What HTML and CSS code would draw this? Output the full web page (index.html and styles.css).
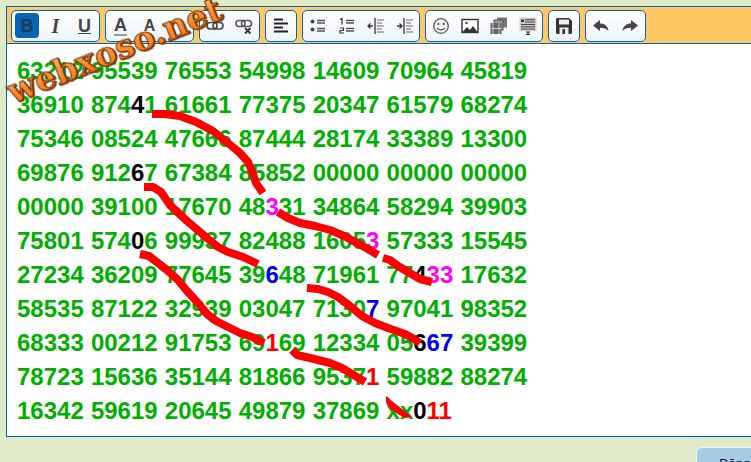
FILE: index.html
```html
<!DOCTYPE html>
<html lang="vi">
<head>
    <meta charset="UTF-8">
    <title>webxoso.net</title>
    <link rel="stylesheet" href="styles.css">
</head>
<body>
    <div class="editor">
        <div class="toolbar">
            <div class="tb-group">
                <button class="tb-btn active"><b class="glyph">B</b></button>
                <button class="tb-btn"><i class="glyph serif">I</i></button>
                <button class="tb-btn"><u class="glyph">U</u></button>
            </div>
            <div class="tb-group">
                <button class="tb-btn"><span class="glyph under">A</span></button>
                <button class="tb-btn"><span class="glyph small">A</span></button>
                <button class="tb-btn"></button>
            </div>
            <div class="tb-group wide">
                <button class="tb-btn">
                    <svg class="icon" viewBox="0 0 18 18"><g fill="none" stroke="#444" stroke-width="1.6"><rect x="1" y="5.5" width="10" height="6.5" rx="3.2"/><rect x="7" y="5.5" width="10" height="6.5" rx="3.2"/></g></svg>
                </button>
                <button class="tb-btn">
                    <svg class="icon" viewBox="0 0 18 18"><g fill="none" stroke="#555" stroke-width="1.6"><rect x="1" y="3.5" width="9" height="6" rx="3"/><rect x="6.5" y="3.5" width="10" height="6" rx="3"/><path d="M10 11l5.5 5.5M15.500 11L10 16.500" stroke="#333" stroke-width="1.8"/></g></svg>
                </button>
            </div>
            <div class="tb-group wide">
                <button class="tb-btn">
                    <svg class="icon" viewBox="0 0 18 18"><path d="M2 2.500h9M2 6.500h14M2 10.500h9M2 14.500h14" stroke="#222" stroke-width="2"/></svg>
                </button>
            </div>
            <div class="tb-group">
                <button class="tb-btn">
                    <svg class="icon" viewBox="0 0 18 18"><circle cx="3.500" cy="4.500" r="2" fill="#444"/><circle cx="3.500" cy="12.500" r="2" fill="#444"/><path d="M8 3.500h8M8 6h8M8 11.500h8M8 14h8" stroke="#555" stroke-width="1.3"/></svg>
                </button>
                <button class="tb-btn">
                    <svg class="icon" viewBox="0 0 18 18"><path d="M2 2.500l2-1v6M2 11h3.500v2.500H2V16h4" fill="none" stroke="#333" stroke-width="1.2"/><path d="M8 3.500h8M8 6h8M8 11.500h8M8 14h8" stroke="#555" stroke-width="1.3"/></svg>
                </button>
                <button class="tb-btn">
                    <svg class="icon" viewBox="0 0 18 18"><path d="M1 9h5M3.500 6.500L1 9l2.500 2.500" fill="none" stroke="#333" stroke-width="1.3"/><path d="M8 1v16" stroke="#222" stroke-width="1.2"/><path d="M10 3h7M10 6h5M10 9h7M10 12h5M10 15h7" stroke="#666" stroke-width="1.2"/></svg>
                </button>
                <button class="tb-btn">
                    <svg class="icon" viewBox="0 0 18 18"><path d="M1 9h5M3.500 6.500L6 9l-2.500 2.500" fill="none" stroke="#333" stroke-width="1.3"/><path d="M8 1v16" stroke="#222" stroke-width="1.2"/><path d="M10 3h7M10 6h5M10 9h7M10 12h5M10 15h7" stroke="#666" stroke-width="1.2"/></svg>
                </button>
            </div>
            <div class="tb-group">
                <button class="tb-btn">
                    <svg class="icon" viewBox="0 0 18 18"><circle cx="9" cy="9" r="7.300" fill="#f4f4f4" stroke="#555" stroke-width="1.3"/><circle cx="6.300" cy="7" r="1.100" fill="#444"/><circle cx="11.700" cy="7" r="1.100" fill="#444"/><path d="M5 11c1.500 2.500 6.500 2.500 8 0" fill="none" stroke="#444" stroke-width="1.200"/></svg>
                </button>
                <button class="tb-btn">
                    <svg class="icon" viewBox="0 0 18 18"><rect x="1" y="2.500" width="16" height="13" fill="#fff" stroke="#333" stroke-width="1.400"/><path d="M1.500 15l4.500-5 3 3 3-4 4.500 6z" fill="#333"/><circle cx="5.500" cy="6" r="1.300" fill="#555"/></svg>
                </button>
                <button class="tb-btn">
                    <svg class="icon" viewBox="0 0 18 18"><rect x="7" y="0.500" width="10" height="10" fill="#777"/><rect x="4" y="3" width="9" height="10" fill="#999" stroke="#555"/><rect x="0.500" y="6" width="11" height="11" fill="#666"/><path d="M3 6v11M9 6v11M0.500 11.500h11" stroke="#ccc"/></svg>
                </button>
                <button class="tb-btn">
                    <svg class="icon" viewBox="0 0 18 18"><rect x="0.500" y="0.500" width="17" height="13.500" fill="#ccc"/><path d="M2 2.500h3v2.500H2z" fill="#333"/><path d="M6 2.800h10M6 5h10M2 7.500h14M2 9.800h14M2 12h14" stroke="#444" stroke-width="1.100"/><path d="M7 15h4M7 17.500h4M9 15v2.500" stroke="#222" stroke-width="1.100"/></svg>
                </button>
            </div>
            <div class="tb-group wide">
                <button class="tb-btn">
                    <svg class="icon" viewBox="0 0 18 18"><path d="M2.500 1h11.500l3 3v11.500a1.500 1.500 0 0 1-1.500 1.500h-13A1.500 1.500 0 0 1 1 15.500v-13A1.500 1.500 0 0 1 2.500 1z" fill="#333"/><rect x="4" y="2.500" width="10" height="5" fill="#eee"/><rect x="4.500" y="10.500" width="9" height="6.500" fill="#eee"/><rect x="7.500" y="12" width="2.500" height="5" fill="#333"/></svg>
                </button>
            </div>
            <div class="tb-group wide">
                <button class="tb-btn">
                    <svg class="icon" viewBox="0 0 18 18"><path d="M1 8.500L8 3v3.500c4.500 0 8 2.500 8.500 7.500-2-2.700-4.500-3.300-8.500-3.300V14z" fill="#444"/></svg>
                </button>
                <button class="tb-btn">
                    <svg class="icon" viewBox="0 0 18 18"><path d="M17 8.500L10 3v3.500C5.500 6.500 2 9 1.500 14c2-2.700 4.500-3.300 8.500-3.300V14z" fill="#444"/></svg>
                </button>
            </div>
        </div>

        <div class="content">
            <div class="row">63212 95539 76553 54998 14609 70964 45819</div>
            <div class="row">36910 874<span class="k">4</span>1 61661 77375 20347 61579 68274</div>
            <div class="row">75346 08524 47666 87444 28174 33389 13300</div>
            <div class="row">69876 912<span class="k">6</span>7 67384 85852 00000 00000 00000</div>
            <div class="row">00000 39100 17670 48<span class="m">3</span>31 34864 58294 39903</div>
            <div class="row">75801 574<span class="k">0</span>6 99937 82488 1605<span class="m">3</span> 57333 15545</div>
            <div class="row">27234 36209 77645 39<span class="u">6</span>48 71961 77<span class="k">4</span><span class="m">33</span> 17632</div>
            <div class="row">58535 87122 32939 03047 7130<span class="u">7</span> 97041 98352</div>
            <div class="row">68333 00212 91753 69<span class="r">1</span>69 12334 05<span class="k">6</span><span class="u">67</span> 39399</div>
            <div class="row">78723 15636 35144 81866 9537<span class="r">1</span> 59882 88274</div>
            <div class="row">16342 59619 20645 49879 37869 xx<span class="k">0</span><span class="r">11</span></div>
        </div>
    </div>

    <div class="footer">
        <button class="submit">Đăng nhập</button>
    </div>

    <!-- net ve tay va logo nam de len tren trang -->
    <svg class="overlay" viewBox="0 0 751 462">
        <defs>
            <linearGradient id="logoFill" x1="0" y1="0" x2="0" y2="1">
                <stop offset="0" stop-color="#ffb868"/>
                <stop offset="0.55" stop-color="#ff8a2e"/>
                <stop offset="1" stop-color="#ee6a12"/>
            </linearGradient>
        </defs>
        <g class="strokes">
            <polyline points="152,114 165,114 180,116 196,122 213,131 228,143 240,153 248,162 252,171 256,183 263,193"/>
            <polyline points="144,187 153,187 161,192 170,205 187,221 207,238 218,247 228,252 243,257 258,264"/>
            <polyline points="140,254 149,256 158,263 167,270 178,280 187,291 198,303 207,314 216,321 228,327 240,333 252,337 264,343"/>
            <polyline points="278,212 288,218 300,223 315,226 330,230 344,236 357,243 368,249 378,255"/>
            <polyline points="383,258 390,260 398,266 408,272 420,279 432,282"/>
            <polyline points="307,288 318,289 328,292 338,297 350,306 362,316 375,323 388,328 405,334 414,339 420,343"/>
            <polyline points="292,350 297,355 310,358 330,363 342,368 352,374 365,382"/>
        </g>
        <path class="strokes-end" d="M386 396L389 398C394 404 405 410 412 417L405 418C396 413 388 409 386 402Z"/>
        <text class="logo" fill="url(#logoFill)" transform="translate(13 104) rotate(-22)">webxoso.net</text>
    </svg>
</body>
</html>
```

FILE: styles.css
```css
* {
    box-sizing: border-box;
}

html, body {
    margin: 0;
    height: 100%;
    overflow: hidden;
}

body {
    position: relative;
    background-color: #dfebc8;
    padding: 6px 0 0 6px;
    font-family: "Liberation Sans", Arial, sans-serif;
}

.editor {
    width: 760px;
    height: 431px;
    border: 1px solid #0066bb;
    background: white;
}

.toolbar {
    display: flex;
    gap: 5px;
    height: 37px;
    padding: 3px 4px 0 4px;
    background-color: #ffc864;
    border-bottom: 1px solid #0066bb;
}

.tb-group {
    display: flex;
    height: 32px;
    background: linear-gradient(#ffffff, #eef4fb);
    border: 1px solid #0066bb;
    border-radius: 5px;
}

.tb-group.wide {
    padding: 0 0.5px;
}

.tb-btn {
    display: flex;
    align-items: center;
    justify-content: center;
    width: 29px;
    padding: 0;
    border: none;
    background: transparent;
}

.tb-btn.active {
    background-color: #0a64ad;
    border-radius: 4px;
    margin: 2px 2px 3px 3px;
    width: 24px;
}

.glyph {
    font-size: 18px;
    font-weight: bold;
    color: #444;
    line-height: 1;
}

.tb-btn.active .glyph {
    color: #173f60;
}

.glyph.serif {
    font-family: "Liberation Serif", serif;
    font-size: 20px;
}

.glyph.under {
    border-bottom: 2px solid #999;
}

.glyph.small {
    font-size: 16px;
}

.icon {
    width: 18px;
    height: 18px;
}

.content {
    padding: 10px 0 0 10px;
    font-size: 24px;
    font-weight: bold;
    line-height: 34px;
    word-spacing: 0.5px;
    color: #00b000;
}

.row {
    white-space: pre;
}

.k { color: #000000; }
.m { color: #ff00ff; }
.u { color: #0000ff; }
.r { color: #ff0000; }

.footer {
    display: flex;
    padding: 10px 0 0 690px;
}

.submit {
    flex: none;
    width: 110px;
    height: 30px;
    padding: 3px 0 0 0;
    border: 1px solid #f3f7f0;
    border-radius: 6px 6px 0 0;
    background-color: #a8cbe4;
    color: #111;
    font-family: "Liberation Sans", Arial, sans-serif;
    font-size: 13px;
    text-align: center;
    vertical-align: top;
}

.overlay {
    position: absolute;
    left: 0;
    top: 0;
    width: 751px;
    height: 462px;
    pointer-events: none;
}

.strokes polyline {
    fill: none;
    stroke: #ff0000;
    stroke-width: 8;
    stroke-linecap: butt;
    stroke-linejoin: round;
}

.strokes-end {
    fill: #ff0000;
}

.logo {
    font-family: "DejaVu Serif", serif;
    font-weight: bold;
    font-size: 33px;
    letter-spacing: 0.2px;
    stroke: #6a3208;
    stroke-width: 1px;
    filter: drop-shadow(1px 1px 0 #7a3a0c);
}
```
